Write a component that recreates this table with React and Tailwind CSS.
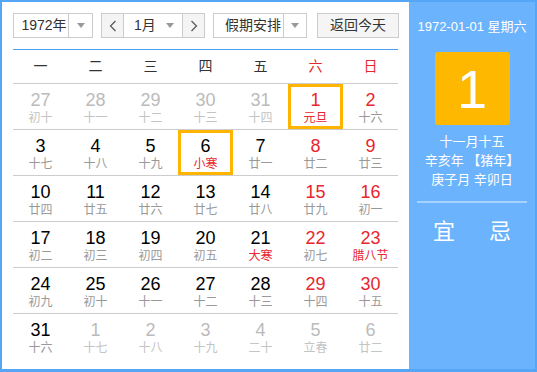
import React from "react";

const FONT = { fontFamily: '"Liberation Sans", "Noto Sans CJK SC", sans-serif' };

const weekdays = [
  { t: "一" },
  { t: "二" },
  { t: "三" },
  { t: "四" },
  { t: "五" },
  { t: "六", red: true },
  { t: "日", red: true },
];

// d: day, l: lunar, o: other month, r: red day, lr: red lunar, h: highlighted
const rows = [
  [
    { d: 27, l: "初十", o: true },
    { d: 28, l: "十一", o: true },
    { d: 29, l: "十二", o: true },
    { d: 30, l: "十三", o: true },
    { d: 31, l: "十四", o: true },
    { d: 1, l: "元旦", r: true, lr: true, h: true },
    { d: 2, l: "十六", r: true },
  ],
  [
    { d: 3, l: "十七" },
    { d: 4, l: "十八" },
    { d: 5, l: "十九" },
    { d: 6, l: "小寒", lr: true, h: true },
    { d: 7, l: "廿一" },
    { d: 8, l: "廿二", r: true },
    { d: 9, l: "廿三", r: true },
  ],
  [
    { d: 10, l: "廿四" },
    { d: 11, l: "廿五" },
    { d: 12, l: "廿六" },
    { d: 13, l: "廿七" },
    { d: 14, l: "廿八" },
    { d: 15, l: "廿九", r: true },
    { d: 16, l: "初一", r: true },
  ],
  [
    { d: 17, l: "初二" },
    { d: 18, l: "初三" },
    { d: 19, l: "初四" },
    { d: 20, l: "初五" },
    { d: 21, l: "大寒", lr: true },
    { d: 22, l: "初七", r: true },
    { d: 23, l: "腊八节", r: true, lr: true },
  ],
  [
    { d: 24, l: "初九" },
    { d: 25, l: "初十" },
    { d: 26, l: "十一" },
    { d: 27, l: "十二" },
    { d: 28, l: "十三" },
    { d: 29, l: "十四", r: true },
    { d: 30, l: "十五", r: true },
  ],
  [
    { d: 31, l: "十六" },
    { d: 1, l: "十七", o: true },
    { d: 2, l: "十八", o: true },
    { d: 3, l: "十九", o: true },
    { d: 4, l: "二十", o: true },
    { d: 5, l: "立春", o: true },
    { d: 6, l: "廿二", o: true },
  ],
];

const Caret = () => (
  <span className="w-0 h-0 border-l-[4px] border-r-[4px] border-t-[5px] border-l-transparent border-r-transparent border-t-[#999]" />
);

const Chevron = ({ left }) => (
  <svg width="8" height="12" viewBox="0 0 8 12" fill="none">
    <path
      d={left ? "M6.5 1 L1.5 6 L6.5 11" : "M1.5 1 L6.5 6 L1.5 11"}
      stroke="#555"
      strokeWidth="1.2"
    />
  </svg>
);

const Cell = ({ c }) => {
  let num = "text-black";
  if (c.o) num = "text-[#bbbbbb]";
  else if (c.r) num = "text-[#e8262d]";
  let lun = "text-[#999999]";
  if (c.o) lun = "text-[#c4c4c4]";
  if (c.lr) lun = "text-[#e8262d]";
  return (
    <div
      className={`h-[45px] flex flex-col items-center border-[3px] ${
        c.h ? "border-[#ffb400]" : "border-transparent"
      }`}
    >
      <span className={`text-[18px] leading-[20px] mt-[3px] ${num}`}>{c.d}</span>
      <span className={`text-[12px] leading-[14px] mt-[1px] ${lun}`}>{c.l}</span>
    </div>
  );
};

const App = () => {
  return (
    <div
      className="w-[537px] h-[372px] border-2 border-b-[3px] border-[#56a6f7] flex bg-white"
      style={FONT}
    >
      <div className="w-[407px] pl-[11px] pr-[9px] pt-[11px]">
        <div className="flex items-center h-[25px] text-[14px] text-[#333]">
          <div className="w-[80px] h-[25px] border border-[#cccccc] flex">
            <span className="flex-1 flex items-center justify-center pl-[6px]">1972年</span>
            <span className="w-[24px] border-l border-[#cccccc] flex items-center justify-center">
              <Caret />
            </span>
          </div>
          <div className="ml-[8px] w-[104px] h-[25px] border border-[#cccccc] flex">
            <span className="w-[22px] bg-[#f4f4f4] border-r border-[#cccccc] flex items-center justify-center">
              <Chevron left />
            </span>
            <span className="flex-1 flex items-center justify-between pl-[10px] pr-[8px]">
              1月
              <Caret />
            </span>
            <span className="w-[22px] bg-[#f4f4f4] border-l border-[#cccccc] flex items-center justify-center">
              <Chevron />
            </span>
          </div>
          <div className="ml-[8px] w-[94px] h-[25px] border border-[#cccccc] flex">
            <span className="flex-1 flex items-center pl-[11px]">假期安排</span>
            <span className="w-[23px] border-l border-[#cccccc] flex items-center justify-center">
              <Caret />
            </span>
          </div>
          <div className="ml-[10px] w-[82px] h-[25px] border border-[#cccccc] bg-[#f5f5f5] flex items-center justify-center">
            返回今天
          </div>
        </div>
        <div className="mt-[11px] w-[385px] h-px bg-[#4d9ff0]" />
        <div className="w-[385px] grid grid-cols-7 h-[34px] border-b border-[#cccccc] text-[14px]">
          {weekdays.map((w) => (
            <div
              key={w.t}
              className={`flex items-center justify-center ${w.red ? "text-[#e8262d]" : "text-[#333]"}`}
            >
              {w.t}
            </div>
          ))}
        </div>
        <div className="w-[385px]">
          {rows.map((r, i) => (
            <div
              key={i}
              className={`grid grid-cols-7 ${i < rows.length - 1 ? "border-b border-[#cccccc]" : ""}`}
            >
              {r.map((c, j) => (
                <Cell key={j} c={c} />
              ))}
            </div>
          ))}
        </div>
      </div>
      <div className="flex-1 bg-[#6cb3fd] flex flex-col items-center text-white">
        <div className="mt-[17px] text-[13px] leading-[16px]">1972-01-01 星期六</div>
        <div className="mt-[17px] w-[75px] h-[73px] bg-[#ffb800] rounded-[3px] flex items-center justify-center text-[54px] leading-none">
          1
        </div>
        <div className="mt-[7px] text-[13px] leading-[19px] flex flex-col items-center">
          <span>十一月十五</span>
          <span>辛亥年 【猪年】</span>
          <span>庚子月 辛卯日</span>
        </div>
        <div className="mt-[12px] w-[110px] h-[2px] bg-[#a6d2ff]" />
        <div className="mt-[15px] w-[110px] flex justify-between px-[16px] text-[22px] leading-[28px]">
          <span>宜</span>
          <span>忌</span>
        </div>
      </div>
    </div>
  );
};

export default App;
